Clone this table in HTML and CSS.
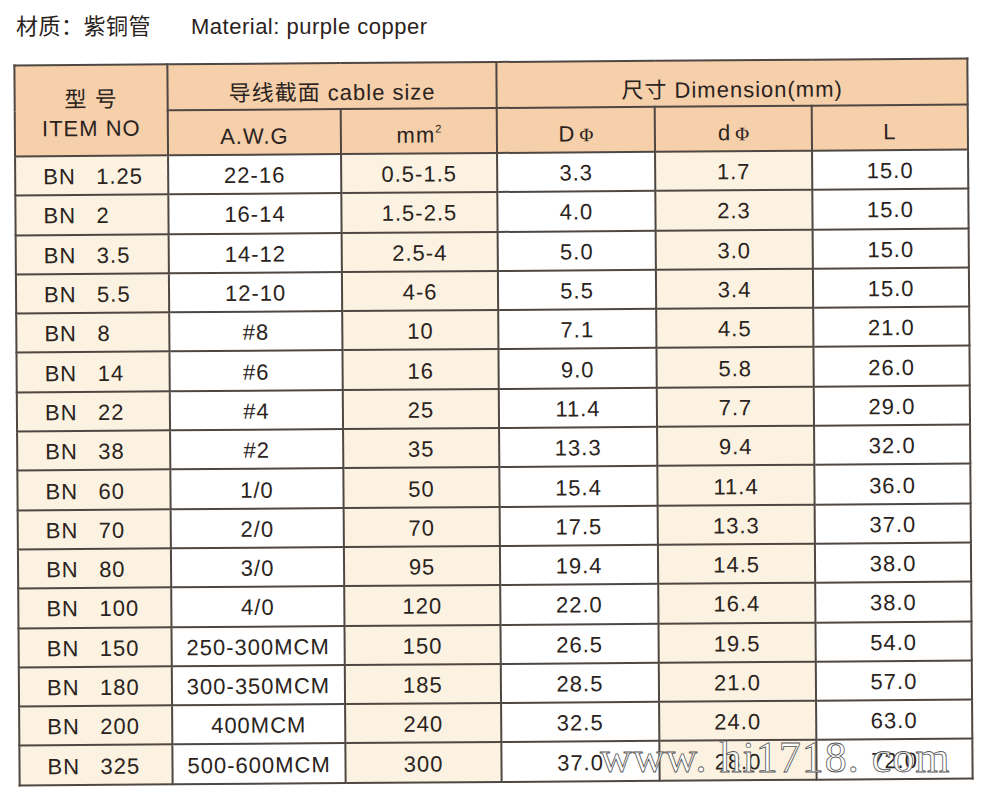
FILE: index.html
```html
<!DOCTYPE html>
<html lang="zh">
<head>
<meta charset="utf-8">
<title>紫铜管 规格表</title>
<link rel="stylesheet" href="styles.css">
</head>
<body>
<div class="page">
  <div class="title"><span class="title-zh">材质：紫铜管</span><span class="title-en">Material: purple copper</span></div>
  <table class="spec">
    <colgroup>
      <col class="c-item"><col class="c-awg"><col class="c-mm"><col class="c-dd"><col class="c-d"><col class="c-l">
    </colgroup>
    <thead>
      <tr class="head-1">
        <th rowspan="2" class="item-head"><div>型 号</div><div>ITEM NO</div></th>
        <th colspan="2">导线截面 cable size</th>
        <th colspan="3">尺寸 Dimension(mm)</th>
      </tr>
      <tr class="head-2">
        <th>A.W.G</th>
        <th>mm<sup class="sq">2</sup></th>
        <th>D<span class="phi">Φ</span></th>
        <th>d<span class="phi">Φ</span></th>
        <th>L</th>
      </tr>
    </thead>
    <tbody>
      <tr><td class="item"><span class="bn">BN</span><span>1.25</span></td><td>22-16</td><td class="cream">0.5-1.5</td><td>3.3</td><td class="cream">1.7</td><td>15.0</td></tr>
      <tr><td class="item"><span class="bn">BN</span><span>2</span></td><td>16-14</td><td class="cream">1.5-2.5</td><td>4.0</td><td class="cream">2.3</td><td>15.0</td></tr>
      <tr><td class="item"><span class="bn">BN</span><span>3.5</span></td><td>14-12</td><td class="cream">2.5-4</td><td>5.0</td><td class="cream">3.0</td><td>15.0</td></tr>
      <tr><td class="item"><span class="bn">BN</span><span>5.5</span></td><td>12-10</td><td class="cream">4-6</td><td>5.5</td><td class="cream">3.4</td><td>15.0</td></tr>
      <tr><td class="item"><span class="bn">BN</span><span>8</span></td><td>#8</td><td class="cream">10</td><td>7.1</td><td class="cream">4.5</td><td>21.0</td></tr>
      <tr><td class="item"><span class="bn">BN</span><span>14</span></td><td>#6</td><td class="cream">16</td><td>9.0</td><td class="cream">5.8</td><td>26.0</td></tr>
      <tr><td class="item"><span class="bn">BN</span><span>22</span></td><td>#4</td><td class="cream">25</td><td>11.4</td><td class="cream">7.7</td><td>29.0</td></tr>
      <tr><td class="item"><span class="bn">BN</span><span>38</span></td><td>#2</td><td class="cream">35</td><td>13.3</td><td class="cream">9.4</td><td>32.0</td></tr>
      <tr><td class="item"><span class="bn">BN</span><span>60</span></td><td>1/0</td><td class="cream">50</td><td>15.4</td><td class="cream">11.4</td><td>36.0</td></tr>
      <tr><td class="item"><span class="bn">BN</span><span>70</span></td><td>2/0</td><td class="cream">70</td><td>17.5</td><td class="cream">13.3</td><td>37.0</td></tr>
      <tr><td class="item"><span class="bn">BN</span><span>80</span></td><td>3/0</td><td class="cream">95</td><td>19.4</td><td class="cream">14.5</td><td>38.0</td></tr>
      <tr><td class="item"><span class="bn">BN</span><span>100</span></td><td>4/0</td><td class="cream">120</td><td>22.0</td><td class="cream">16.4</td><td>38.0</td></tr>
      <tr><td class="item"><span class="bn">BN</span><span>150</span></td><td>250-300MCM</td><td class="cream">150</td><td>26.5</td><td class="cream">19.5</td><td>54.0</td></tr>
      <tr><td class="item"><span class="bn">BN</span><span>180</span></td><td>300-350MCM</td><td class="cream">185</td><td>28.5</td><td class="cream">21.0</td><td>57.0</td></tr>
      <tr><td class="item"><span class="bn">BN</span><span>200</span></td><td>400MCM</td><td class="cream">240</td><td>32.5</td><td class="cream">24.0</td><td>63.0</td></tr>
      <tr><td class="item"><span class="bn">BN</span><span>325</span></td><td>500-600MCM</td><td class="cream">300</td><td>37.0</td><td class="cream">28.0</td><td>72.0</td></tr>
    </tbody>
  </table>
  <div class="watermark">www. hi1718. com</div>
</div>
</body>
</html>
```

FILE: styles.css
```css
html, body {
  margin: 0;
  padding: 0;
  background: #ffffff;
}

.page {
  position: relative;
  width: 983px;
  height: 797px;
  padding: 11px 0 0 16px;
  box-sizing: border-box;
  font-family: "Liberation Sans", "Noto Sans CJK SC", sans-serif;
  color: #2a2320;
}

.title {
  display: flex;
  align-items: baseline;
  height: 26px;
  line-height: 26px;
  font-size: 22px;
  letter-spacing: 0.5px;
}

.title-zh {
  font-family: "Noto Sans CJK SC", sans-serif;
}

.title-en {
  margin-left: 40px;
}

.spec {
  margin-top: 24px;
  width: 953px;
  border-collapse: collapse;
  table-layout: fixed;
  transform: rotate(-0.42deg);
  transform-origin: 50% 50%;
  font-size: 22px;
  letter-spacing: 1px;
}

.c-item { width: 153px; }
.c-awg { width: 173px; }
.c-mm { width: 156px; }
.c-dd { width: 158px; }
.c-d { width: 157px; }
.c-l { width: 156px; }

.spec th,
.spec td {
  border: 2px solid #4f4742;
  padding: 0;
  text-align: center;
  vertical-align: middle;
  font-weight: normal;
  white-space: nowrap;
}

.spec th {
  background: #f6cfab;
  padding-top: 8px;
}

.head-1 th {
  height: 36px;
}

.head-2 th {
  height: 35px;
}

.spec th.item-head {
  line-height: 29px;
  padding-top: 6px;
}

.sq {
  font-size: 11px;
  vertical-align: 10px;
  line-height: 0;
  letter-spacing: 0;
}

.phi {
  font-family: "Liberation Serif", serif;
  font-size: 19px;
  letter-spacing: 0;
  margin-left: 4px;
}

.spec td {
  height: 34.3px;
  padding-top: 3px;
  background: #ffffff;
}

.spec td.cream,
.spec td.item {
  background: #fcf2e1;
}

.spec td.item {
  text-align: left;
  padding-left: 27px;
}

.bn {
  display: inline-block;
  width: 53px;
}

.watermark {
  position: absolute;
  left: 600px;
  top: 736px;
  font-family: "Liberation Serif", serif;
  font-size: 44px;
  line-height: 44px;
  letter-spacing: 1px;
  color: #ffffff;
  -webkit-text-stroke: 0.8px #555555;
  white-space: nowrap;
}
```
